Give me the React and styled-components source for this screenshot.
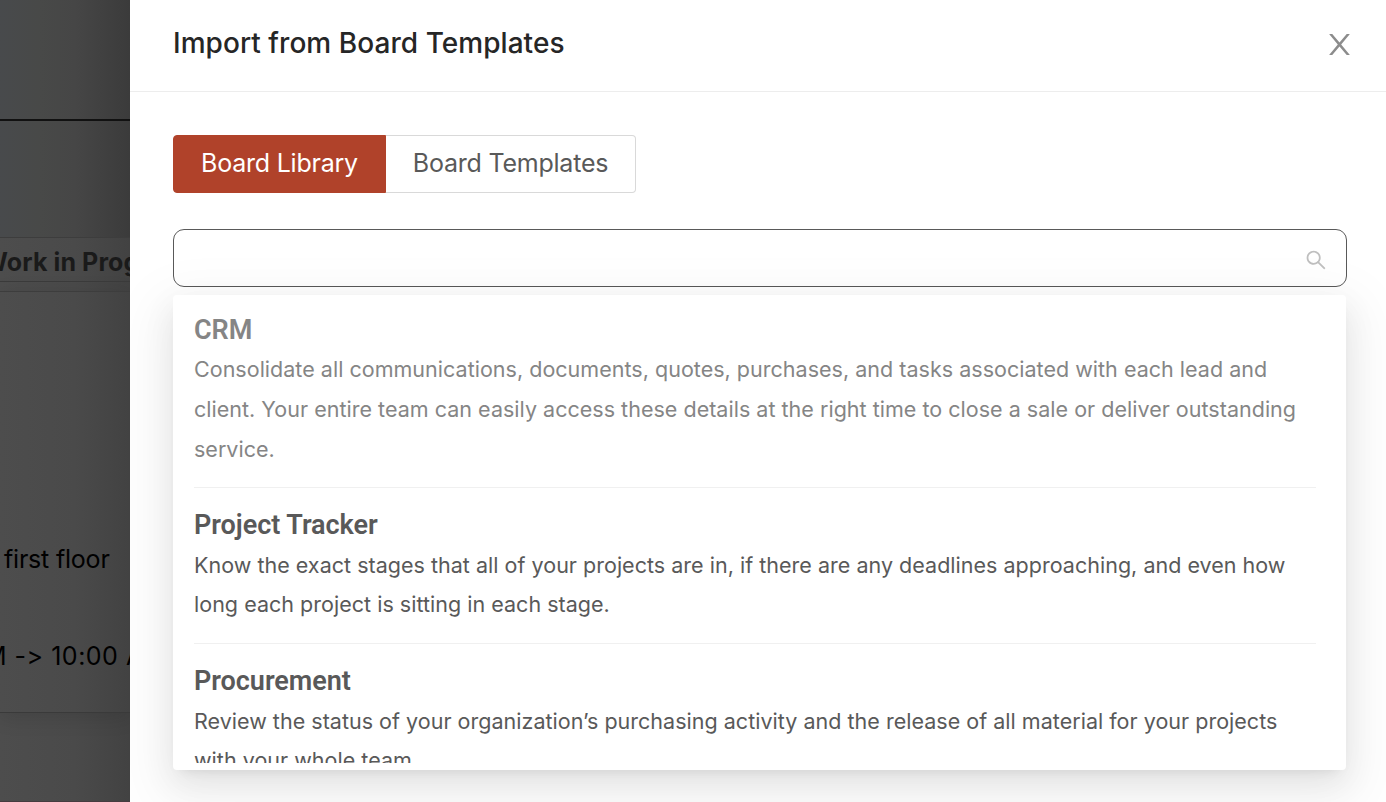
import styled, { createGlobalStyle } from "styled-components";
import { AiOutlineSearch } from "react-icons/ai";

const GlobalStyle = createGlobalStyle`
  * {
    box-sizing: border-box;
  }

  body {
    margin: 0;
    overflow: hidden;
    font-family: Inter, "Liberation Sans", sans-serif;
  }
`;

const Page = styled.div`
  display: flex;
  width: 100vw;
  height: 100vh;
  overflow: hidden;
  background: #4d4d4d;
`;

const Backdrop = styled.div`
  display: flex;
  flex-direction: column;
  flex: 0 0 130px;
  overflow: hidden;
  white-space: nowrap;
  border-bottom: 1px solid #463c40;
  background: linear-gradient(90deg, #4d4d4d 0, #4a4a4a 75px, #424242 130px);
`;

const BackdropTop = styled.div`
  height: 121px;
  border-bottom: 2px solid #111;
  background: linear-gradient(90deg, #484a4c 0, #484948 40px, #464646 75px, #3b3b3b 130px);
`;

const BackdropGap = styled(BackdropTop)`
  height: 116px;
  border: 0;
`;

const BoardHeading = styled.div`
  height: 45px;
  margin-bottom: 9px;
  border-top: 1px solid #3d3d3d;
  border-bottom: 1px solid #3b3b3b;
  font-size: 25px;
  font-weight: 700;
  line-height: 49px;
  text-indent: -18px;
  letter-spacing: 0.1px;
  color: #1a1a1a;
`;

const BoardCard = styled.div`
  display: flex;
  flex-direction: column;
  height: 422px;
  border-top: 1px solid #3d3d3d;
  border-bottom: 1px solid #3a3a3a;
  box-shadow: 0 4px 20px rgba(0, 0, 0, 0.12);
`;

const CardLine = styled.div`
  margin-top: ${({ $top }) => $top}px;
  margin-left: ${({ $left }) => $left}px;
  font-size: 25px;
  line-height: 32px;
  letter-spacing: ${({ $spacing }) => $spacing}px;
  color: #000;
`;

const Drawer = styled.div`
  flex: 1;
  overflow: hidden;
  background: #fff;
`;

const Header = styled.div`
  display: flex;
  justify-content: space-between;
  align-items: center;
  height: 92px;
  padding: 0 32px 2px 43px;
  border-bottom: 1px solid #ededed;
`;

const Title = styled.h1`
  margin: 0;
  padding-bottom: 4px;
  font-size: 28px;
  font-weight: 500;
  line-height: 40px;
  letter-spacing: 0.05px;
  color: #262626;
`;

const CloseIcon = styled.svg`
  width: 29px;
  height: 29px;
  fill: #8c8c8c;
`;

const Content = styled.div`
  padding: 43px 39px 0 43px;
`;

const Tabs = styled.div`
  display: flex;
`;

const Tab = styled.button`
  width: ${({ $width }) => $width}px;
  height: 58px;
  padding: 0 0 2px;
  border: 1px solid ${({ $active }) => ($active ? "#b0422a" : "#d9d9d9")};
  border-left-width: ${({ $active }) => ($active ? 1 : 0)}px;
  border-radius: ${({ $active }) => ($active ? "4px 0 0 4px" : "0 4px 4px 0")};
  background: ${({ $active }) => ($active ? "#b0422a" : "#fff")};
  font-family: inherit;
  font-size: 25px;
  letter-spacing: -0.22px;
  color: ${({ $active }) => ($active ? "#fff" : "#595959")};
`;

const SearchField = styled.div`
  position: relative;
  height: 58px;
  margin-top: 36px;
`;

const SearchBox = styled.div`
  display: flex;
  justify-content: flex-end;
  align-items: center;
  height: 58px;
  padding: 3px 18px 0 0;
  border: 1px solid #595959;
  border-radius: 11px;
`;

const SearchIcon = styled(AiOutlineSearch)`
  font-size: 24px;
  color: #bfbfbf;
`;

const Dropdown = styled.div`
  position: absolute;
  top: 66px;
  left: 0;
  right: 1px;
  height: 475px;
  padding: 8px 30px 7px 21px;
  border-radius: 4px;
  background: #fff;
  box-shadow:
    0 6px 12px -8px rgba(0, 0, 0, 0.12),
    0 12px 32px rgba(0, 0, 0, 0.08),
    0 18px 56px 16px rgba(0, 0, 0, 0.05);
`;

const Options = styled.div`
  height: 460px;
  overflow: hidden;
`;

const OptionName = styled.div`
  font-family: Roboto, "Liberation Sans", sans-serif;
  font-size: 27px;
  font-weight: 600;
  line-height: 40px;
  letter-spacing: -0.04px;
`;

const OptionText = styled.div`
  font-size: 21.5px;
  letter-spacing: 0.02px;
  white-space: nowrap;
`;

const Option = styled.div`
  padding: 17px 0 19px;
  border-bottom: 1px solid #f0f0f0;
  line-height: 39px;
  color: ${({ $selected }) => ($selected ? "#858585" : "#595959")};

  ${OptionName} {
    margin-bottom: 1px;
  }

  &:first-child {
    padding: 7px 0 18px;
    line-height: 40px;

    ${OptionName} {
      margin-bottom: -1px;
    }
  }
`;

const templates = [
  {
    name: "CRM",
    selected: true,
    lines: [
      "Consolidate all communications, documents, quotes, purchases, and tasks associated with each lead and",
      "client. Your entire team can easily access these details at the right time to close a sale or deliver outstanding",
      "service.",
    ],
  },
  {
    name: "Project Tracker",
    lines: [
      "Know the exact stages that all of your projects are in, if there are any deadlines approaching, and even how",
      "long each project is sitting in each stage.",
    ],
  },
  {
    name: "Procurement",
    lines: [
      "Review the status of your organization’s purchasing activity and the release of all material for your projects",
      "with your whole team.",
    ],
  },
];

const App = () => {
  return (
    <Page>
      <GlobalStyle />
      <Backdrop>
        <BackdropTop />
        <BackdropGap />
        <BoardHeading>Work in Progress</BoardHeading>
        <BoardCard>
          <CardLine $top={251} $left={4} $spacing={-0.2}>
            first floor
          </CardLine>
          <CardLine $top={65} $left={-16} $spacing={0.5}>
            M -&gt; 10:00 AM
          </CardLine>
        </BoardCard>
      </Backdrop>
      <Drawer>
        <Header>
          <Title>Import from Board Templates</Title>
          <CloseIcon viewBox="64 64 896 896">
            <path d="M563.8 512l262.5-312.9c4.4-5.2.7-13.1-6.1-13.1h-79.8c-4.7 0-9.2 2.1-12.3 5.7L511.6 449.8 295.1 191.7c-3-3.6-7.5-5.7-12.3-5.7H203c-6.8 0-10.5 7.9-6.1 13.1L459.4 512 196.9 824.9A7.95 7.95 0 0 0 203 838h79.8c4.7 0 9.2-2.1 12.3-5.7l216.5-258.1 216.5 258.1c3 3.6 7.5 5.7 12.3 5.7h79.8c6.8 0 10.5-7.9 6.1-13.1L563.8 512z" />
          </CloseIcon>
        </Header>
        <Content>
          <Tabs>
            <Tab $active $width={213}>
              Board Library
            </Tab>
            <Tab $width={250}>Board Templates</Tab>
          </Tabs>
          <SearchField>
            <SearchBox>
              <SearchIcon />
            </SearchBox>
            <Dropdown>
              <Options>
                {templates.map(({ name, selected, lines }) => (
                  <Option key={name} $selected={selected}>
                    <OptionName>{name}</OptionName>
                    {lines.map((line) => (
                      <OptionText key={line}>{line}</OptionText>
                    ))}
                  </Option>
                ))}
              </Options>
            </Dropdown>
          </SearchField>
        </Content>
      </Drawer>
    </Page>
  );
};

export default App;
